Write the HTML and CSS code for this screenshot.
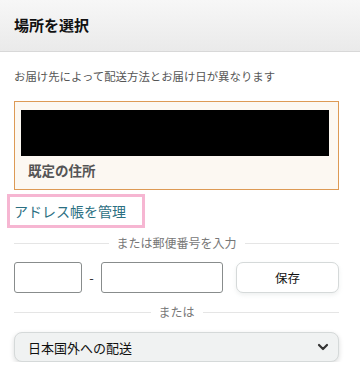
FILE: index.html
```html
<!DOCTYPE html>
<html lang="ja">
<head>
  <meta charset="UTF-8">
  <title>場所を選択</title>
  <meta name="viewport" content="width=device-width, initial-scale=1.0"/>
  <link rel="stylesheet" href="styles.css">
</head>
<body>
  <div class="header">場所を選択</div>
  <div class="content">
    <p class="note">お届け先によって配送方法とお届け日が異なります</p>
    <div class="address">
      <div class="redacted"></div>
      <div class="label">既定の住所</div>
    </div>
    <a class="manage" href="#">アドレス帳を管理</a>
    <div class="divider"><span>または郵便番号を入力</span></div>
    <div class="zip">
      <input class="zip1" type="text">
      <span class="dash">-</span>
      <input class="zip2" type="text">
      <button class="save">保存</button>
    </div>
    <div class="divider or"><span>または</span></div>
    <div class="select">
      <span>日本国外への配送</span>
      <svg width="12" height="8" viewBox="0 0 12 8"><path d="M2 2 L6 6 L10 2" fill="none" stroke="#333" stroke-width="2.2" stroke-linecap="round" stroke-linejoin="round"/></svg>
    </div>
  </div>
</body>
</html>
```

FILE: styles.css
```css
body {
  margin: 0;
  background: #fff;
  font-family: "Noto Sans CJK JP", "Noto Sans", sans-serif;
  color: #111;
}
.header {
  height: 52px;
  box-sizing: border-box;
  padding: 13px 14px;
  font-size: 15px;
  font-weight: bold;
  line-height: 24px;
  background: linear-gradient(#f7f7f7, #eaeaea);
  border-bottom: 1px solid #d8d8d8;
}
.content {
  padding: 0 21px 0 14px;
}
.note {
  margin: 15px 0 0;
  font-size: 11.4px;
  line-height: 18px;
  color: #555;
}
.address {
  margin-top: 16px;
  border: 1px solid #dd9a55;
  background: #fcf8f2;
  padding: 8px 9px 9px 6px;
}
.redacted {
  height: 46px;
  background: #000;
}
.label {
  margin: 4px 0 0 7px;
  font-size: 13.5px;
  font-weight: bold;
  line-height: 20px;
  color: #555;
}
.manage {
  display: inline-block;
  margin: 4px 0 0 -7px;
  padding: 4px 16px 4px 4px;
  border: 3px solid #f6b6d2;
  font-size: 14px;
  line-height: 20px;
  color: #2b6f82;
  text-decoration: none;
}
.divider {
  display: flex;
  align-items: center;
  gap: 8px;
  margin-top: 6px;
  font-size: 12px;
  line-height: 18px;
  color: #777;
}
.divider::before,
.divider::after {
  content: "";
  flex: 1;
  border-top: 1px solid #e5e5e5;
}
.zip {
  display: flex;
  align-items: center;
  margin-top: 10px;
}
.zip input {
  height: 31px;
  box-sizing: border-box;
  border: 1px solid #888c8c;
  border-radius: 3px;
  margin: 0;
}
.zip1 {
  width: 68px;
}
.dash {
  width: 19px;
  text-align: center;
  font-size: 13px;
  color: #333;
}
.zip2 {
  width: 122px;
}
.save {
  margin-left: auto;
  width: 103px;
  height: 31px;
  background: #fff;
  border: 1px solid #d5d9d9;
  border-radius: 7px;
  font-family: inherit;
  font-size: 12.5px;
  color: #111;
  box-shadow: 0 2px 4px rgba(213, 217, 217, 0.4);
}
.or {
  margin-top: 10px;
}
.select {
  margin-top: 11px;
  height: 30px;
  box-sizing: border-box;
  display: flex;
  align-items: center;
  justify-content: space-between;
  padding: 0 9px 0 13px;
  background: #f0f2f2;
  border: 1px solid #d5d9d9;
  border-radius: 8px;
  box-shadow: 0 2px 5px rgba(15, 17, 17, 0.15);
  font-size: 13px;
  color: #111;
}
```
